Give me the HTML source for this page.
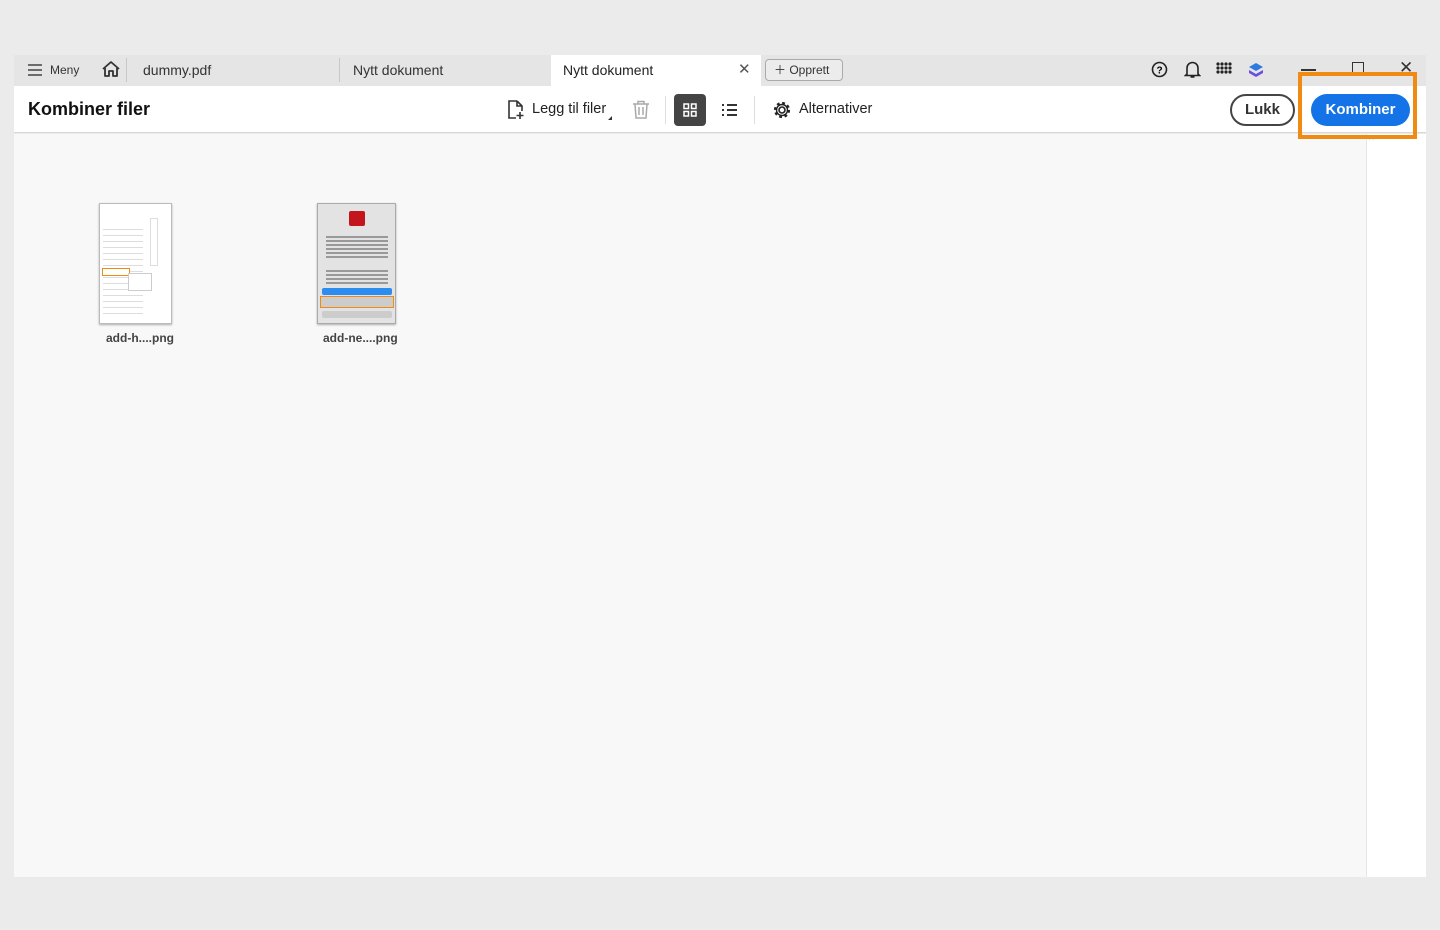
<!DOCTYPE html><html><head><style>
*{box-sizing:border-box;margin:0;padding:0}
body{width:1440px;height:930px;background:#ebebeb;font-family:"Liberation Sans",sans-serif;position:relative;overflow:hidden;color:#222}
.a{position:absolute}
</style></head><body>
<div class="a" style="left:14px;top:55px;width:1412px;height:31px;background:#e5e5e5"></div>
<div class="a" style="left:27px;top:63px"><svg width="16" height="14"><path d="M1 2h14M1 7h14M1 12h14" stroke="#444" stroke-width="1.6"/></svg></div>
<div class="a" style="left:50px;top:63px;font-size:12px;color:#333">Meny</div>
<div class="a" style="left:101px;top:60px"><svg width="20" height="18"><path d="M2 9L10 2l8 7M4 8v8h4v-5h4v5h4V8" fill="none" stroke="#333" stroke-width="1.8" stroke-linejoin="round"/></svg></div>
<div class="a" style="left:126px;top:58px;width:1px;height:24px;background:#c8c8c8"></div>
<div class="a" style="left:143px;top:62px;font-size:14px;color:#333">dummy.pdf</div>
<div class="a" style="left:339px;top:58px;width:1px;height:24px;background:#c8c8c8"></div>
<div class="a" style="left:353px;top:62px;font-size:14px;color:#333">Nytt dokument</div>
<div class="a" style="left:551px;top:55px;width:210px;height:31px;background:#fff"></div>
<div class="a" style="left:563px;top:62px;font-size:14px;color:#222">Nytt dokument</div>
<div class="a" style="left:738px;top:60px;font-size:15px;color:#555">✕</div>
<div class="a" style="left:765px;top:59px;width:78px;height:22px;border:1px solid #aaa;border-radius:4px;background:#ececec;font-size:12px;color:#333;padding:2px 0 0 8px;line-height:16px">＋ Opprett</div>
<div class="a" style="left:1151px;top:61px"><svg width="17" height="17"><circle cx="8.5" cy="8.5" r="7" fill="none" stroke="#222" stroke-width="1.6"/><text x="8.5" y="12.5" font-size="10" font-weight="bold" text-anchor="middle" font-family="Liberation Sans">?</text></svg></div>
<div class="a" style="left:1184px;top:60px"><svg width="17" height="19"><path d="M3 14V8a5.5 5.5 0 0111 0v6l1.5 1.5h-14zM6.5 17h4" fill="none" stroke="#222" stroke-width="1.6"/></svg></div>
<div class="a" style="left:1216px;top:62px"><svg width="16" height="16" fill="#222"><circle cx="2" cy="2" r="1.6"/><circle cx="6" cy="2" r="1.6"/><circle cx="10" cy="2" r="1.6"/><circle cx="14" cy="2" r="1.6"/><circle cx="2" cy="6" r="1.6"/><circle cx="6" cy="6" r="1.6"/><circle cx="10" cy="6" r="1.6"/><circle cx="14" cy="6" r="1.6"/><circle cx="2" cy="10" r="1.6"/><circle cx="6" cy="10" r="1.6"/><circle cx="10" cy="10" r="1.6"/><circle cx="14" cy="10" r="1.6"/></svg></div>
<div class="a" style="left:1248px;top:62px"><svg width="16" height="16"><path d="M8 1l7 4-7 4-7-4z" fill="#2d7be0"/><path d="M1 8l7 4 7-4v3l-7 4-7-4z" fill="#6a4fd8"/></svg></div>
<div class="a" style="left:1301px;top:69px;width:15px;height:2px;background:#333"></div>
<div class="a" style="left:1352px;top:62px;width:12px;height:12px;border:1.5px solid #333"></div>
<div class="a" style="left:1399px;top:58px;font-size:17px;color:#333">✕</div>
<div class="a" style="left:14px;top:86px;width:1412px;height:47px;background:#fff;border-bottom:1px solid #d8d8d8"></div>
<div class="a" style="left:28px;top:99px;font-size:18px;font-weight:bold;color:#111">Kombiner filer</div>
<div class="a" style="left:507px;top:100px"><svg width="18" height="20"><path d="M10 1H2v17h7M10 1l5 5v5M10 1v5h5M13 12v7M9.5 15.5h7" fill="none" stroke="#333" stroke-width="1.6"/></svg></div>
<div class="a" style="left:532px;top:101px;font-size:14.5px;color:#222">Legg til filer</div>
<div class="a" style="left:608px;top:116px;width:0;height:0;border-left:4px solid transparent;border-bottom:4px solid #333"></div>
<div class="a" style="left:632px;top:100px"><svg width="18" height="19"><path d="M1 4h16M6 4V1.5h6V4M3 4l1 14h10l1-14M7 7v8M11 7v8" fill="none" stroke="#aaa" stroke-width="1.5"/></svg></div>
<div class="a" style="left:665px;top:96px;width:1px;height:28px;background:#ddd"></div>
<div class="a" style="left:674px;top:94px;width:32px;height:32px;background:#444;border-radius:4px"></div>
<div class="a" style="left:683px;top:103px"><svg width="14" height="14" fill="none" stroke="#fff" stroke-width="1.5"><rect x="1" y="1" width="4.5" height="4.5"/><rect x="8.5" y="1" width="4.5" height="4.5"/><rect x="1" y="8.5" width="4.5" height="4.5"/><rect x="8.5" y="8.5" width="4.5" height="4.5"/></svg></div>
<div class="a" style="left:721px;top:103px"><svg width="16" height="14" stroke="#333" stroke-width="2"><path d="M1 2h2M1 7h2M1 12h2M6 2h10M6 7h10M6 12h10"/></svg></div>
<div class="a" style="left:754px;top:96px;width:1px;height:28px;background:#ddd"></div>
<div class="a" style="left:772px;top:100px"><svg width="20" height="20"><circle cx="10" cy="10" r="3" fill="none" stroke="#222" stroke-width="1.6"/><circle cx="10" cy="10" r="6.5" fill="none" stroke="#222" stroke-width="3.2" stroke-dasharray="2.6 2.5"/><circle cx="10" cy="10" r="5.5" fill="none" stroke="#222" stroke-width="1.4"/></svg></div>
<div class="a" style="left:799px;top:101px;font-size:14.5px;color:#222">Alternativer</div>
<div class="a" style="left:1230px;top:94px;width:65px;height:32px;border:2px solid #444;border-radius:16px;font-size:15px;font-weight:bold;color:#333;text-align:center;line-height:28px">Lukk</div>
<div class="a" style="left:1311px;top:94px;width:99px;height:32px;background:#1473e6;border-radius:16px;font-size:15px;font-weight:bold;color:#fff;text-align:center;line-height:32px">Kombiner</div>
<div class="a" style="left:14px;top:134px;width:1352px;height:743px;background:#f8f8f8"></div>
<div class="a" style="left:1366px;top:134px;width:16px;height:743px;background:#fff;border-left:1px solid #e6e6e6"></div>
<div class="a" style="left:1369px;top:135px;font-size:10px;color:#bbb">^</div>
<div class="a" style="left:1382px;top:134px;width:44px;height:743px;background:#fff"></div>
<div class="a" style="left:1298px;top:72px;width:119px;height:67px;border:4px solid #f08a13"></div>
<div class="a" style="left:99px;top:203px;width:73px;height:121px;background:#fff;border:1px solid #bbb;box-shadow:0 1px 2px rgba(0,0,0,.3)">
<div class="a" style="left:50px;top:14px;width:8px;height:48px;border:1px solid #ddd"></div>
<div class="a" style="left:3px;top:20px;width:40px;height:90px;background:repeating-linear-gradient(#fff 0 5px,#ddd 5px 6px)"></div>
<div class="a" style="left:2px;top:64px;width:28px;height:8px;border:1px solid #f08a13;background:#fff"></div>
<div class="a" style="left:28px;top:69px;width:24px;height:18px;border:1px solid #ccc;background:#fff"></div>
</div>
<div class="a" style="left:106px;top:331px;font-size:12px;font-weight:bold;color:#444">add-h....png</div>
<div class="a" style="left:317px;top:203px;width:79px;height:121px;background:#e3e3e3;border:1px solid #aaa;box-shadow:0 1px 2px rgba(0,0,0,.3)">
<div class="a" style="left:31px;top:7px;width:16px;height:15px;background:#c4151c;border-radius:2px"></div>
<div class="a" style="left:8px;top:30px;width:62px;height:24px;background:repeating-linear-gradient(#e3e3e3 0 2px,#999 2px 4px)"></div>
<div class="a" style="left:8px;top:64px;width:62px;height:16px;background:repeating-linear-gradient(#e3e3e3 0 2px,#999 2px 4px)"></div>
<div class="a" style="left:4px;top:84px;width:70px;height:7px;background:#2d8cf0;border-radius:2px"></div>
<div class="a" style="left:2px;top:92px;width:74px;height:12px;border:1.5px solid #f08a13;background:#ccc"></div>
<div class="a" style="left:4px;top:107px;width:70px;height:7px;background:#ccc;border-radius:2px"></div>
</div>
<div class="a" style="left:323px;top:331px;font-size:12px;font-weight:bold;color:#444">add-ne....png</div>
</body></html>
